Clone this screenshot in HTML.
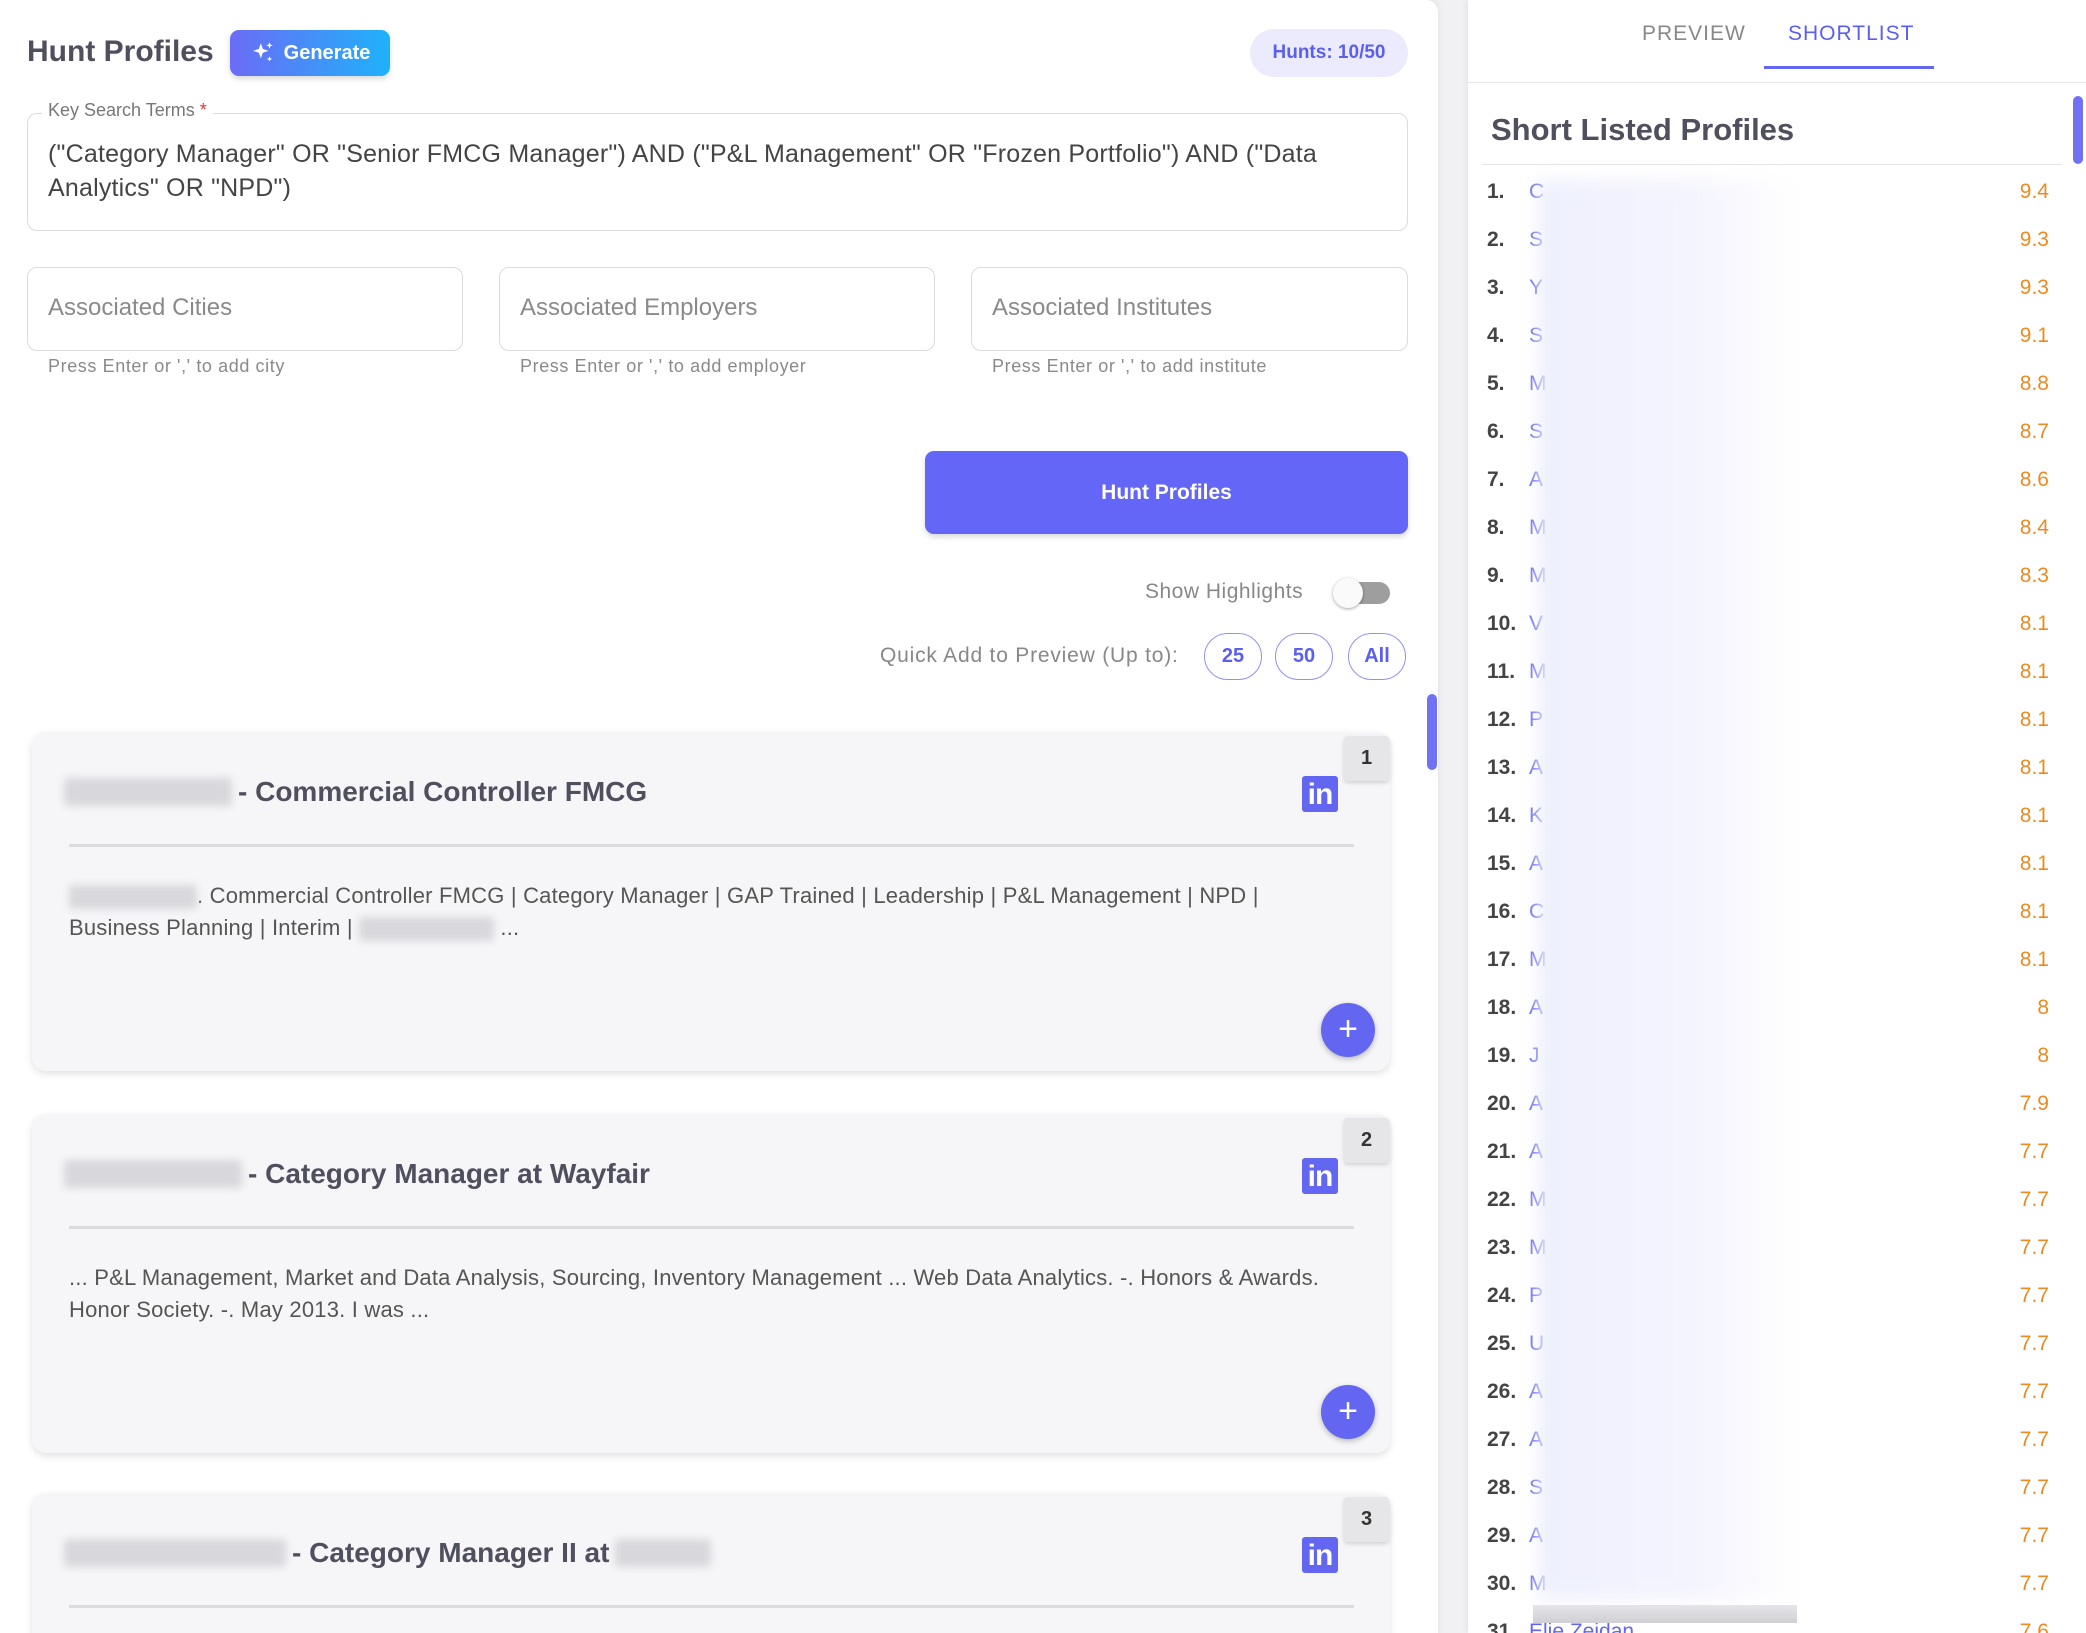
<!DOCTYPE html>
<html style="width:2086px;height:1633px;overflow:hidden"><head><meta charset="utf-8"><style>
*{box-sizing:border-box;margin:0;padding:0}
body{width:2086px;height:1633px;overflow:hidden;background:#f1f1f4;font-family:"Liberation Sans",sans-serif;position:relative;color:#555}
.abs{position:absolute}
#left{left:0;top:0;width:1438px;height:1633px;background:#fff;border-radius:0 12px 0 0;box-shadow:0 0 8px rgba(0,0,0,.08);overflow:hidden}
#right{left:1468px;top:0;width:618px;height:1633px;background:#fff;box-shadow:0 0 8px rgba(0,0,0,.08)}
.field{border:1.5px solid #dcdce0;border-radius:10px;background:#fff}
.ph{color:#8a8a8a;font-size:24px}
.help{color:#8a8a8a;font-size:18px;letter-spacing:.6px}
.card{left:32px;width:1358px;height:339px;background:#f6f6f9;border-radius:14px;box-shadow:0 3px 8px rgba(0,0,0,.12)}
.badge{right:1px;top:4px;width:45px;height:45px;background:#e6e6e8;border-radius:4px;box-shadow:0 2px 4px rgba(0,0,0,.15);font-weight:bold;font-size:20px;color:#333;text-align:center;line-height:45px}
.ctitle{left:32px;top:44px;font-size:28px;font-weight:bold;color:#4f4f5e;white-space:nowrap;display:flex;align-items:center}
.blur{display:inline-block;background:#d8d8dc;filter:blur(4px);height:28px;border-radius:4px}
.div{left:37px;right:36px;top:112px;height:3px;background:#dcdcdf}
.body{left:37px;top:148px;width:1300px;font-size:22px;line-height:32px;color:#555;letter-spacing:.2px}
.li{right:52px;top:44px;width:36px;height:36px;background:#6366f1;border-radius:3px;color:#fff;font-weight:bold;font-size:30px;line-height:38px;text-align:center;letter-spacing:-1px}
.plus{right:15px;top:271px;width:54px;height:54px;border-radius:50%;background:#6366f1;color:#fff;font-size:34px;text-align:center;line-height:52px;box-shadow:0 2px 6px rgba(0,0,0,.25)}
.pill{width:58px;height:47px;border:1.5px solid #8e91f2;border-radius:24px;color:#5b5ff0;font-weight:bold;font-size:20px;text-align:center;line-height:44px;top:633px}
.row{left:1487px;width:562px;height:48px;font-size:21px;display:flex;align-items:center}
.row b{color:#444;width:42px;display:inline-block}
.row span.n{color:#6366f1}
.row span.s{margin-left:auto;color:#ee8a22}
</style></head><body>
<div id="left" class="abs">
 <div class="abs" style="left:27px;top:35px;font-size:30px;font-weight:bold;color:#4f4f5e">Hunt Profiles</div>
 <div class="abs" style="left:230px;top:30px;width:160px;height:46px;border-radius:9px;background:linear-gradient(90deg,#6b6cf6,#1eb2fa);color:#fff;font-weight:bold;font-size:20px;display:flex;align-items:center;justify-content:center;gap:8px;box-shadow:0 3px 6px rgba(0,0,0,.15)">
  <svg width="26" height="26" viewBox="0 0 24 24" fill="#fff"><path d="M10 3l1.8 5.2L17 10l-5.2 1.8L10 17l-1.8-5.2L3 10l5.2-1.8z"/><path d="M18 2l.8 2.2L21 5l-2.2.8L18 8l-.8-2.2L15 5l2.2-.8z"/><path d="M18 15l.7 1.8 1.8.7-1.8.7L18 20l-.7-1.8-1.8-.7 1.8-.7z"/></svg>Generate</div>
 <div class="abs" style="left:1250px;top:29px;width:158px;height:48px;border-radius:24px;background:#ebebfd;color:#5b5ff0;font-weight:bold;font-size:19px;text-align:center;line-height:48px">Hunts: 10/50</div>
 <div class="abs field" style="left:27px;top:113px;width:1381px;height:118px"></div>
 <div class="abs" style="left:42px;top:100px;background:#fff;padding:0 6px;font-size:18px;color:#777">Key Search Terms <span style="color:#e33">*</span></div>
 <div class="abs" style="left:48px;top:137px;width:1345px;font-size:25px;line-height:34px;color:#444;letter-spacing:.2px">("Category Manager" OR "Senior FMCG Manager") AND ("P&amp;L Management" OR "Frozen Portfolio") AND ("Data Analytics" OR "NPD")</div>
 <div class="abs field" style="left:27px;top:267px;width:436px;height:84px"></div>
 <div class="abs field" style="left:499px;top:267px;width:436px;height:84px"></div>
 <div class="abs field" style="left:971px;top:267px;width:437px;height:84px"></div>
 <div class="abs ph" style="left:48px;top:294px">Associated Cities</div>
 <div class="abs ph" style="left:520px;top:294px">Associated Employers</div>
 <div class="abs ph" style="left:992px;top:294px">Associated Institutes</div>
 <div class="abs help" style="left:48px;top:356px">Press Enter or ',' to add city</div>
 <div class="abs help" style="left:520px;top:356px">Press Enter or ',' to add employer</div>
 <div class="abs help" style="left:992px;top:356px">Press Enter or ',' to add institute</div>
 <div class="abs" style="left:925px;top:451px;width:483px;height:83px;background:#6366f6;border-radius:9px;color:#fff;font-weight:bold;font-size:21px;text-align:center;line-height:83px;box-shadow:0 3px 6px rgba(0,0,0,.15)">Hunt Profiles</div>
 <div class="abs" style="left:1145px;top:580px;font-size:21px;color:#888;letter-spacing:.5px">Show Highlights</div>
 <div class="abs" style="left:1340px;top:582px;width:50px;height:22px;border-radius:11px;background:#9e9e9e"></div>
 <div class="abs" style="left:1333px;top:578px;width:30px;height:30px;border-radius:50%;background:#fafafa;box-shadow:0 1px 3px rgba(0,0,0,.35)"></div>
 <div class="abs" style="left:880px;top:644px;font-size:21px;color:#888;letter-spacing:.8px">Quick Add to Preview (Up to):</div>
 <div class="abs pill" style="left:1204px">25</div>
 <div class="abs pill" style="left:1275px">50</div>
 <div class="abs pill" style="left:1348px">All</div>
 <div class="abs" style="left:1427px;top:694px;width:10px;height:76px;border-radius:5px;background:#7072f3"></div>

 <div class="abs card" style="top:732px">
  <div class="abs badge">1</div>
  <div class="abs ctitle"><span class="blur" style="width:168px;margin-right:6px"></span>- Commercial Controller FMCG</div>
  <div class="abs li">in</div>
  <div class="abs div"></div>
  <div class="abs body"><span class="blur" style="width:128px;height:24px;vertical-align:middle"></span>. Commercial Controller FMCG | Category Manager | GAP Trained | Leadership | P&amp;L Management | NPD |<br>Business Planning | Interim | <span class="blur" style="width:135px;height:24px;vertical-align:middle"></span> ...</div>
  <div class="abs plus">+</div>
 </div>
 <div class="abs card" style="top:1114px">
  <div class="abs badge">2</div>
  <div class="abs ctitle"><span class="blur" style="width:178px;margin-right:6px"></span>- Category Manager at Wayfair</div>
  <div class="abs li">in</div>
  <div class="abs div"></div>
  <div class="abs body">... P&amp;L Management, Market and Data Analysis, Sourcing, Inventory Management ... Web Data Analytics. -. Honors &amp; Awards.<br>Honor Society. -. May 2013. I was ...</div>
  <div class="abs plus">+</div>
 </div>
 <div class="abs card" style="top:1493px;height:200px">
  <div class="abs badge">3</div>
  <div class="abs ctitle"><span class="blur" style="width:222px;margin-right:6px"></span>- Category Manager II at <span class="blur" style="width:96px;margin-left:6px"></span></div>
  <div class="abs li">in</div>
  <div class="abs div"></div>
 </div>
</div>

<div id="right" class="abs">
 <div class="abs" style="left:174px;top:22px;font-size:21px;color:#888;letter-spacing:1px">PREVIEW</div>
 <div class="abs" style="left:320px;top:22px;font-size:21px;color:#5b5ff0;letter-spacing:1px">SHORTLIST</div>
 <div class="abs" style="left:296px;top:66px;width:170px;height:3px;background:#6366f1"></div>
 <div class="abs" style="left:0;top:82px;width:618px;height:1px;background:#e6e6ea"></div>
 <div class="abs" style="left:23px;top:112px;font-size:31px;font-weight:bold;color:#4f4f5e">Short Listed Profiles</div>
 <div class="abs" style="left:14px;top:164px;width:580px;height:1px;background:#e6e6ea"></div>
 <div class="abs" style="left:605px;top:96px;width:10px;height:68px;border-radius:5px;background:#7072f3"></div>
</div>
<div id="rows"></div>
<div class="abs" style="left:1538px;top:180px;width:260px;height:1420px;background:linear-gradient(90deg,#eef0fd,#f4f4fe 60%,rgba(255,255,255,0));filter:blur(8px)"></div>
<div class="abs" style="left:1533px;top:1605px;width:264px;height:18px;background:linear-gradient(#e6e6ea,#cfcfd4)"></div>
<script>
var L="CSYSMSAMMVMPAKACMAJAAMMPUAASAM".split(""),S=["9.4","9.3","9.3","9.1","8.8","8.7","8.6","8.4","8.3","8.1","8.1","8.1","8.1","8.1","8.1","8.1","8.1","8","8","7.9","7.7","7.7","7.7","7.7","7.7","7.7","7.7","7.7","7.7","7.7"];
var h="";for(var i=0;i<30;i++){h+='<div class="abs row" style="top:'+(168+i*48)+'px"><b>'+(i+1)+'.</b><span class="n">'+L[i]+'</span><span class="s">'+S[i]+'</span></div>';}
h+='<div class="abs row" style="top:1608px"><b>31.</b><span class="n" style="text-decoration:underline">Elie Zeidan</span><span class="s">7.6</span></div>';
document.getElementById("rows").innerHTML=h;
</script>
</body></html>
